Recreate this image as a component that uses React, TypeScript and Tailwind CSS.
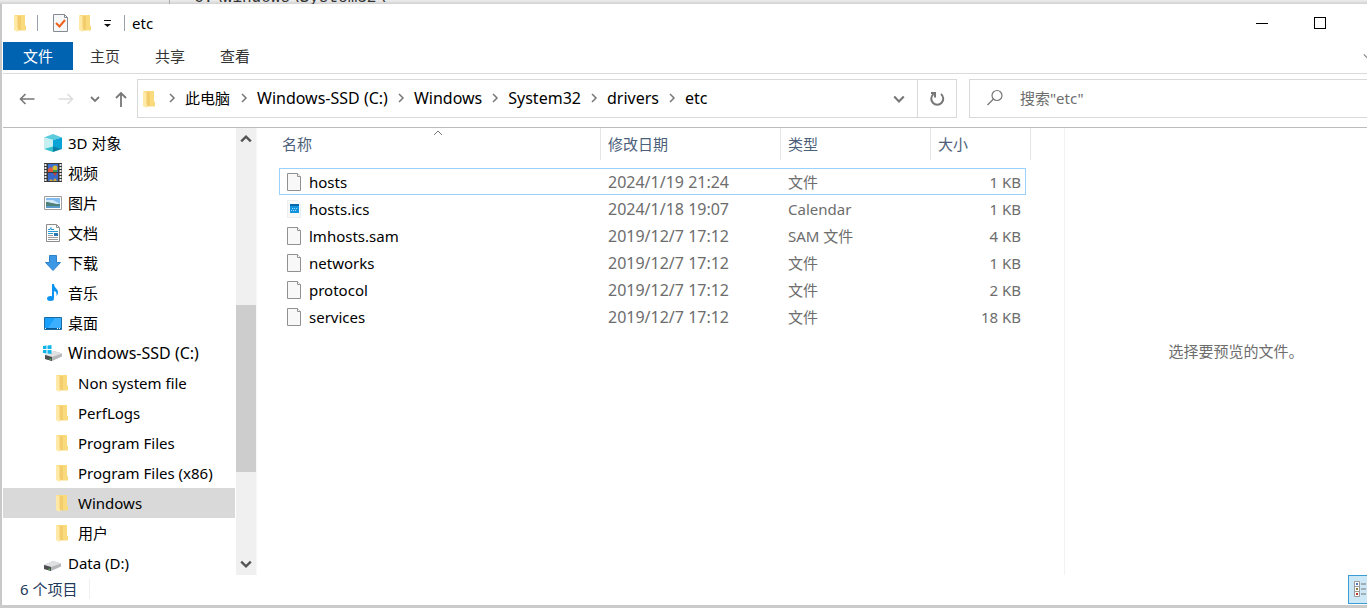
import type { ReactNode } from 'react';

type PlaceIcon = 'cube' | 'video' | 'picture' | 'document' | 'download' | 'music' | 'desktop' | 'system' | 'drive' | 'folder';

interface Place {
  name: string;
  icon: PlaceIcon;
  selected?: boolean;
}

interface FileItem {
  name: string;
  modified: string;
  type: string;
  size: string;
  selected?: boolean;
}

const places: Place[] = [
  { name: '3D 对象', icon: 'cube' },
  { name: '视频', icon: 'video' },
  { name: '图片', icon: 'picture' },
  { name: '文档', icon: 'document' },
  { name: '下载', icon: 'download' },
  { name: '音乐', icon: 'music' },
  { name: '桌面', icon: 'desktop' },
  { name: 'Windows-SSD (C:)', icon: 'system' },
  { name: 'Non system file', icon: 'folder' },
  { name: 'PerfLogs', icon: 'folder' },
  { name: 'Program Files', icon: 'folder' },
  { name: 'Program Files (x86)', icon: 'folder' },
  { name: 'Windows', icon: 'folder', selected: true },
  { name: '用户', icon: 'folder' },
  { name: 'Data (D:)', icon: 'drive' },
];

const files: FileItem[] = [
  { name: 'hosts', modified: '2024/1/19 21:24', type: '文件', size: '1 KB', selected: true },
  { name: 'hosts.ics', modified: '2024/1/18 19:07', type: 'Calendar', size: '1 KB' },
  { name: 'lmhosts.sam', modified: '2019/12/7 17:12', type: 'SAM 文件', size: '4 KB' },
  { name: 'networks', modified: '2019/12/7 17:12', type: '文件', size: '1 KB' },
  { name: 'protocol', modified: '2019/12/7 17:12', type: '文件', size: '2 KB' },
  { name: 'services', modified: '2019/12/7 17:12', type: '文件', size: '18 KB' },
];

const crumbs = ['Windows-SSD (C:)', 'Windows', 'System32', 'drivers', 'etc'];

function FolderIcon() {
  return (
    <svg width="12" height="18" viewBox="0 0 12 18" className="shrink-0" aria-hidden="true">
      <path d="M1 1h10v10.500l1 .5v4.500H3z" fill="#f9da7c" />
      <path d="M3 2h4v14H3z" fill="#f3cd6c" />
      <path d="M0 1l3.500 1.500v11l.5 1V18l-4-2z" fill="#ffe9a6" />
    </svg>
  );
}

function DriveBody() {
  return (
    <>
      <path d="M1 9l9-4 8 2.500v3L8 15l-7-2z" fill="#b5b7b9" />
      <path d="M1 9l9-4 8 2.500L8 11z" fill="#dfe1e3" />
      <path d="M1 9l7 2v4l-7-2z" fill="#4b4d50" />
      <path d="M5.500 12.500l1.500.5v1l-1.500-.5z" fill="#4fe04f" />
    </>
  );
}

function PlaceGlyph({ icon }: { icon: PlaceIcon }) {
  if (icon === 'folder') return <FolderIcon />;
  return (
    <svg width="20" height="20" viewBox="0 0 20 20" className="shrink-0" aria-hidden="true">
      {icon === 'cube' && (
        <>
          <path d="M1 4.500L10 1l9 3.500-9 2.500z" fill="#59cbdc" />
          <path d="M1 4.500L10 7v8l-9 1z" fill="#c5eff1" />
          <path d="M19 4.500L10 7v8l9 1z" fill="#0aa3d6" />
          <path d="M1 16l9-2.500V19z" fill="#35c0d0" />
          <path d="M19 16l-9-2.500V19z" fill="#0880a6" />
        </>
      )}
      {icon === 'video' && (
        <>
          <path d="M1 0h18v19H1z" fill="#3a3a3a" />
          <path d="M5 1h10v8H5z" fill="#3c6fd0" />
          <path d="M5 10h10v8H5z" fill="#3768c8" />
          <path d="M2.500 1v17M17.500 1v17" stroke="#e8e8e8" strokeWidth="2" strokeDasharray="2 1" />
          <path d="M5 6l3-2 2 2v3H5z" fill="#e2573d" />
          <circle cx="12" cy="5" r="2.500" fill="#d6bb34" />
          <path d="M10 7h4v2h-4z" fill="#3c9a48" />
          <path d="M10 10h4l-2 3z" fill="#c8402f" />
          <path d="M6 18l2-2 2 2 2-3 2 3z" fill="#d6a934" />
        </>
      )}
      {icon === 'picture' && (
        <>
          <path d="M1.500 3.500h17v13h-17z" fill="#fff" stroke="#9d9d9d" />
          <path d="M3 5h14v10H3z" fill="#86bdf0" />
          <path d="M3 7h7l7 4H3z" fill="#d2e9fa" />
          <path d="M3 9c4 0 7 2 14 2v4H3z" fill="#4f8178" />
          <path d="M3 13h14v2H3z" fill="#5a9ac9" />
        </>
      )}
      {icon === 'document' && (
        <>
          <path d="M3.500 1.500h10l3 3v14h-13z" fill="#fff" stroke="#8c8c8c" />
          <path d="M13.500 1.500v3h3" fill="none" stroke="#8c8c8c" />
          <path d="M5 6.500h2l1-2v2h3M5 8.500h10M5 10.500h5" stroke="#2a9ad6" fill="none" />
          <path d="M5 12.500h5M5 14.500h10M5 16.500h10" stroke="#9c9c9c" />
          <path d="M11 10h4v3h-4z" fill="#2878b8" />
        </>
      )}
      {icon === 'download' && <path d="M6.500 2.500h7v7h4L10 17.500 2.500 9.500h4z" fill="#3c97e4" stroke="#2b82cc" />}
      {icon === 'music' && (
        <>
          <path d="M9 1h2c0 4 4.500 5 4 8.500 0 2-1 3-1.500 3.500.5-3-.5-4.500-2.500-5v7H9z" fill="#0f93f0" />
          <ellipse cx="7.500" cy="15.500" rx="3.500" ry="2.500" fill="#0f93f0" />
        </>
      )}
      {icon === 'desktop' && (
        <>
          <path d="M1.500 4.500h17v12h-17z" fill="#18a0fb" stroke="#176ba5" />
          <path d="M12 5h6v10H5z" fill="#3cb0ff" />
          <path d="M2 15.500h16" stroke="#0b5a94" />
          <path d="M2 15.500h1M14 15.500h1M16 15.500h1" stroke="#fff" />
        </>
      )}
      {icon === 'drive' && <g transform="translate(0 3)"><DriveBody /></g>}
      {icon === 'system' && (
        <>
          <g transform="translate(1 3)"><DriveBody /></g>
          <path d="M0 3l3.500-.5V6H0zM4.500 2.400L8.500 2v4h-4zM0 7h3.500v3.500L0 10zM4.500 7h4v4l-4-.4z" fill="#12b5ea" />
        </>
      )}
    </svg>
  );
}

function PageIcon({ calendar }: { calendar?: boolean }) {
  return (
    <svg width="16" height="20" viewBox="0 0 16 20" className="shrink-0" aria-hidden="true">
      {calendar ? (
        <>
          <path d="M1.500 1.500h10l3 3v14h-13z" fill="#f8f9fa" stroke="#eceef0" />
          <path d="M4 5h9v9H4z" fill="#1593dc" />
          <path d="M4 5h9v2H4z" fill="#0765ac" />
          <path d="M6 9.500h6M5 11.500h5" stroke="#9fdcff" strokeDasharray="1 1" />
        </>
      ) : (
        <>
          <path d="M1.500 1.500h10l3 3v14h-13z" fill="#f8f8f8" stroke="#919191" />
          <path d="M11.500 1.500v3h3" fill="#fff" stroke="#919191" />
        </>
      )}
    </svg>
  );
}

function Chevron({ dir, size = 10, color = '#777', width = 1.5 }: { dir: 'right' | 'down' | 'up'; size?: number; color?: string; width?: number }) {
  const d = { right: 'M3 1l4 4-4 4', down: 'M1 3l4 4 4-4', up: 'M1 7l4-4 4 4' }[dir];
  return (
    <svg width={size} height={size} viewBox="0 0 10 10" fill="none" stroke={color} strokeWidth={width} className="shrink-0" aria-hidden="true">
      <path d={d} />
    </svg>
  );
}

function NavButton({ label, children }: { label: string; children: ReactNode }) {
  return (
    <button type="button" aria-label={label} className="flex h-8 items-center justify-center">
      {children}
    </button>
  );
}

function TitleBar() {
  return (
    <header className="flex h-[38px] shrink-0 items-center pl-[11px]">
      <FolderIcon />
      <span className="ml-[11px] h-4 w-px bg-gray-400" />
      <button type="button" aria-label="属性" className="ml-[15px]">
        <svg width="15" height="19" viewBox="0 0 15 19" className="block" fill="none">
          <path d="M.5.5h11l3 3v14H.5z" fill="#f6f7f9" stroke="#858b92" />
          <path d="M11.500.5v3h3" stroke="#858b92" />
          <path d="M3 9l3.500 3.500L12 6" stroke="#f0601c" strokeWidth="2" />
        </svg>
      </button>
      <button type="button" aria-label="新建文件夹" className="ml-[11px]"><FolderIcon /></button>
      <button type="button" aria-label="自定义快速访问工具栏" className="ml-3">
        <svg width="9" height="8" viewBox="0 0 9 8" className="block">
          <path d="M1 1h7v1H1zM1 5h7L4.500 8z" fill="#111" />
        </svg>
      </button>
      <span className="ml-3 h-4 w-px bg-gray-400" />
      <h1 className="ml-[7px] flex-1">etc</h1>
      <div className="flex self-stretch pr-[18px]">
        <button type="button" aria-label="最小化" className="flex w-[58px] items-center justify-center">
          <span className="h-px w-3 bg-black" />
        </button>
        <button type="button" aria-label="最大化" className="flex w-[58px] items-center justify-center">
          <span className="size-3 border border-black" />
        </button>
      </div>
    </header>
  );
}

function Ribbon() {
  return (
    <nav className="flex h-8 shrink-0 items-start border-b border-[#dadbdc]">
      <button type="button" className="h-7 w-[70px] bg-[#0063b1] text-white">文件</button>
      <button type="button" className="ml-[17px] h-7 text-[#333]">主页</button>
      <button type="button" className="ml-[35px] h-7 text-[#333]">共享</button>
      <button type="button" className="ml-[35px] h-7 text-[#333]">查看</button>
      <button type="button" aria-label="展开功能区" className="-mr-1 ml-auto flex h-7 items-center">
        <Chevron dir="down" size={8} color="#888" />
      </button>
    </nav>
  );
}

function AddressBar() {
  return (
    <div className="flex h-[54px] shrink-0 items-start border-b border-[#bcbcbc] pt-[5px]">
      <div className="flex h-[39px] w-[134px] items-center pl-4">
        <NavButton label="后退">
          <svg width="16" height="12" viewBox="0 0 16 12" fill="none" stroke="#777" strokeWidth="1.600">
            <path d="M15.500 6H1.500M6.500 1l-5 5 5 5" />
          </svg>
        </NavButton>
        <span className="w-[23px]" />
        <NavButton label="前进">
          <svg width="16" height="12" viewBox="0 0 16 12" fill="none" stroke="#ddd" strokeWidth="1.600">
            <path d="M.5 6h14M9.500 1l5 5-5 5" />
          </svg>
        </NavButton>
        <span className="w-4" />
        <NavButton label="最近浏览的位置"><Chevron dir="down" width={1.8} /></NavButton>
        <span className="w-[15px]" />
        <NavButton label="上移">
          <svg width="12" height="16" viewBox="0 0 12 16" fill="none" stroke="#777" strokeWidth="1.800">
            <path d="M6 16V2M1 7l5-5 5 5" />
          </svg>
        </NavButton>
      </div>
      <div className="flex h-[39px] min-w-0 flex-1 items-center border border-[#d9d9d9] pl-[5px]">
        <FolderIcon />
        <ol className="flex flex-1 items-center pb-0.5 pl-3 text-base leading-5">
          <li className="flex items-center whitespace-nowrap">
            <Chevron dir="right" />
            <button type="button" className="ml-2 mr-[9px] text-[15px]">此电脑</button>
          </li>
          {crumbs.map((crumb) => (
            <li key={crumb} className="flex items-center whitespace-nowrap">
              <Chevron dir="right" />
              <button type="button" className="mx-2">{crumb}</button>
            </li>
          ))}
        </ol>
        <button type="button" aria-label="上一个位置" className="mr-3"><Chevron dir="down" size={12} width={1.8} /></button>
        <button type="button" aria-label="刷新" className="flex h-full w-[39px] items-center justify-center border-l border-[#d9d9d9]">
          <svg width="16" height="16" viewBox="0 0 16 16" fill="none" stroke="#777" strokeWidth="2">
            <path d="M12 3A6 6 0 1 1 4.500 3" />
            <path d="M2 2h4v4.500" />
          </svg>
        </button>
      </div>
      <label className="ml-3 flex h-[39px] w-[398px] items-center border-y border-l border-[#d9d9d9] pb-0.5 pl-4">
        <svg width="18" height="18" viewBox="0 0 18 18" fill="none" stroke="#777" strokeWidth="1.200" aria-hidden="true">
          <circle cx="11" cy="6.500" r="5" />
          <path d="M7.500 10L1.500 16" />
        </svg>
        <input type="search" aria-label="搜索" placeholder={'搜索"etc"'} className="ml-4 min-w-0 flex-1 outline-none placeholder:text-[#6d6d6d]" />
      </label>
    </div>
  );
}

function Sidebar() {
  return (
    <aside className="flex w-[253px] shrink-0">
      <ul className="min-w-0 flex-1 overflow-hidden">
        {places.map(({ name, icon, selected }) => (
          <li key={name} className={selected ? 'mr-px bg-[#d9d9d9]' : ''}>
            <a href="#" className={`flex h-[30px] items-center whitespace-nowrap ${icon === 'folder' ? 'gap-[10px] pl-[53px]' : 'gap-[5px] pl-10'} ${icon === 'system' ? 'text-base' : ''}`}>
              <PlaceGlyph icon={icon} />
              {name}
            </a>
          </li>
        ))}
      </ul>
      <div className="flex w-5 flex-col items-center bg-[#f0f0f0] py-[5px]">
        <Chevron dir="up" size={12} color="#555" width={2} />
        <div className="mt-40 h-[167px] w-full bg-[#cdcdcd]" />
        <span className="mt-auto"><Chevron dir="down" size={12} color="#555" width={2} /></span>
      </div>
    </aside>
  );
}

function FileTable() {
  return (
    <section className="min-w-0 flex-1 overflow-hidden border-l border-[#f7f7f7] pl-[22px]">
      <table className="w-[752px] table-fixed border-separate border-spacing-0 text-left">
        <colgroup>
          <col className="w-[322px]" />
          <col className="w-[180px]" />
          <col className="w-[150px]" />
          <col className="w-[95px]" />
          <col className="w-[5px]" />
        </colgroup>
        <thead className="text-[#4c607a]">
          <tr className="h-10 align-top">
            <th className="p-0 font-normal">
              <div className="relative flex h-8 items-center border-r border-[#e5e5e5] pl-[3px]">
                名称
                <span className="absolute inset-x-0 top-0 flex justify-center pr-1"><Chevron dir="up" width={1} /></span>
              </div>
            </th>
            <th className="p-0 font-normal"><div className="flex h-8 items-center border-r border-[#e5e5e5] pl-[7px]">修改日期</div></th>
            <th className="p-0 font-normal"><div className="flex h-8 items-center border-r border-[#e5e5e5] pl-[7px]">类型</div></th>
            <th colSpan={2} className="p-0 font-normal"><div className="flex h-8 items-center border-r border-[#e5e5e5] pl-[7px]">大小</div></th>
          </tr>
        </thead>
        <tbody>
          {files.map(({ name, modified, type, size, selected }) => {
            const line = selected ? 'h-[27px] border-y border-[#99d1ff]' : 'h-[27px]';
            return (
              <tr key={name} className="text-[#6d6d6d]">
                <td className={`${line} p-0 ${selected ? 'border-l pl-[6px]' : 'pl-[7px]'}`}>
                  <div className="flex items-center gap-[7px] text-black">
                    <PageIcon calendar={name.endsWith('.ics')} />
                    {name}
                  </div>
                </td>
                <td className={`${line} p-0 pl-[7px] text-base leading-5`}>{modified}</td>
                <td className={`${line} p-0 pl-[7px]`}>{type}</td>
                <td className={`${line} p-0 text-right ${selected ? 'border-r pr-1' : 'pr-[5px]'}`}>{size}</td>
                <td className="p-0" />
              </tr>
            );
          })}
        </tbody>
      </table>
    </section>
  );
}

export default function App() {
  return (
    <div className="flex h-screen flex-col overflow-hidden bg-[#c8c8c8] font-['Noto_Sans','Noto_Sans_CJK_SC',sans-serif] text-[15px] leading-5 text-black">
      <div className="flex h-1 shrink-0 items-end overflow-hidden bg-linear-to-b from-[#eeeeee] to-[#d2d2d2] pl-[169px] font-['Liberation_Mono',monospace] text-base leading-5">
        <span className="h-1 w-px shrink-0 bg-[#aaa]" />
        <span className="-mb-1 pl-6 text-[#333]">C:\Windows\System32\</span>
      </div>
      <main className="ml-[2px] flex min-h-0 flex-1 flex-col overflow-hidden bg-white pl-px">
        <TitleBar />
        <Ribbon />
        <AddressBar />
        <div className="flex min-h-0 flex-1">
          <Sidebar />
          <FileTable />
          <section className="flex w-[303px] shrink-0 items-center justify-center border-l border-[#f2f2f2] pb-0.5 pl-10 text-[#6d6d6d]">
            选择要预览的文件。
          </section>
        </div>
        <footer className="flex h-[30px] shrink-0 items-center justify-between text-[#1e395b]">
          <span className="mb-0.5 border-r border-[#f0f0f0] pl-[17px] pr-3">6 个项目</span>
          <button type="button" aria-label="详细信息" className="flex h-[29px] w-[19px] items-center self-start border-y border-l border-[#3a9bd5] bg-[#cce8f7] pl-[5px]">
            <svg width="13" height="17" viewBox="0 0 13 17" fill="none">
              <path d="M.5.5h5v5h-5zM.5 5.500h5v5h-5zM.5 10.500h5v5h-5z" fill="#fff" stroke="#999" />
              <path d="M7 3h5M7 8h5M7 13h5" stroke="#777" />
              <path d="M2 2h2v2H2z" fill="#4a78c0" />
              <path d="M2 7h2v2H2z" fill="#8b7840" />
              <path d="M2 12h2v2H2z" fill="#b83a25" />
            </svg>
          </button>
        </footer>
      </main>
      <div className="h-[3px] shrink-0 bg-[#cbcbcb]" />
    </div>
  );
}
